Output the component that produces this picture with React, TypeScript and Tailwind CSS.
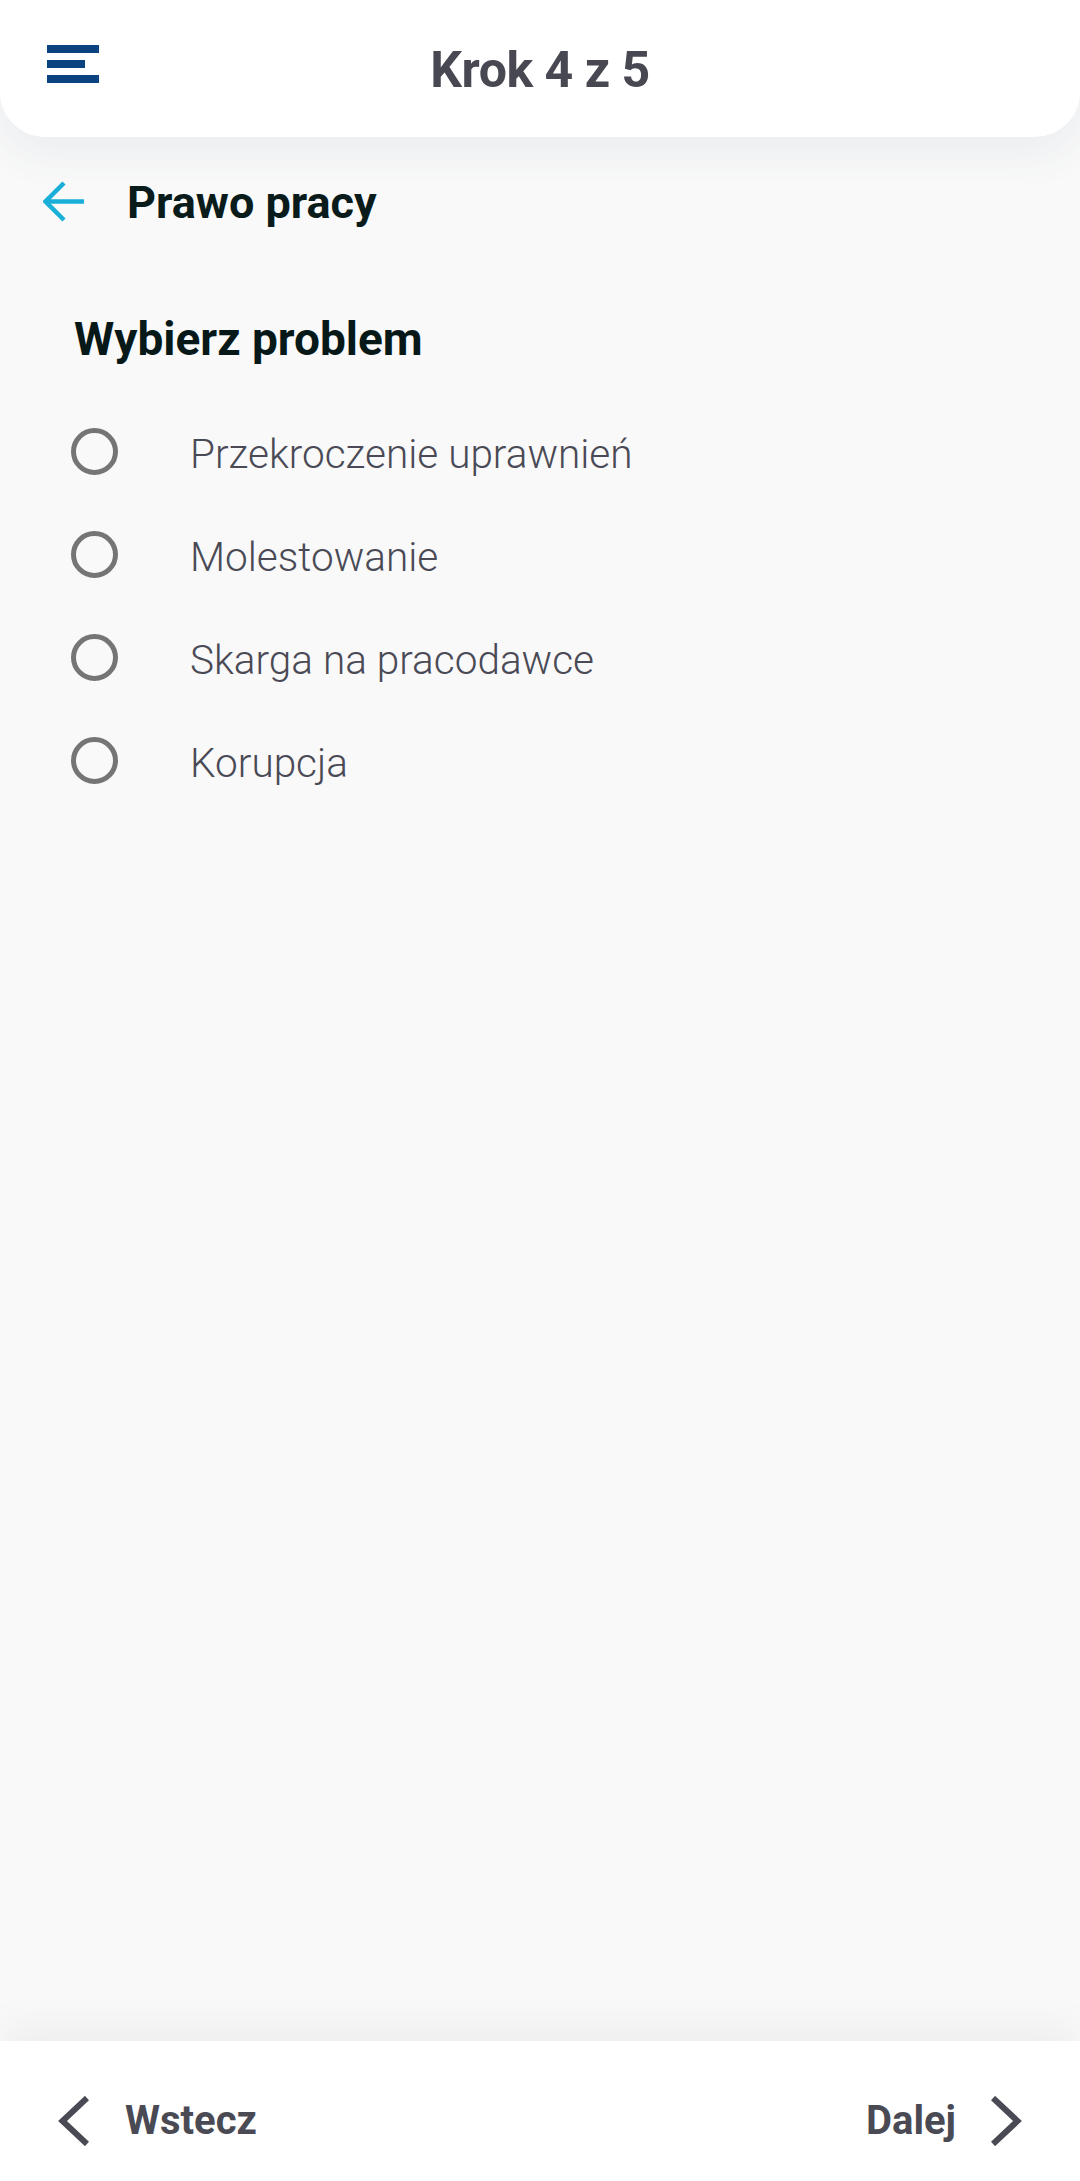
import React from "react";

const options = [
  "Przekroczenie uprawnień",
  "Molestowanie",
  "Skarga na pracodawce",
  "Korupcja",
];

export default function App() {
  return (
    <div
      className="w-[1080px] h-[2181px] bg-[#f9f9f9] flex flex-col overflow-hidden"
      style={{ fontFamily: "Roboto, 'Open Sans', sans-serif" }}
    >
      {/* Header */}
      <header className="h-[137px] shrink-0 bg-white rounded-b-[45px] shadow-[0_18px_40px_rgba(60,80,110,0.07)] grid grid-cols-[1fr_auto_1fr] items-start px-[47px] relative z-10">
        <button className="mt-[45px] flex flex-col gap-[7px] w-[52px]" aria-label="menu">
          <span className="block h-[8px] w-[52px] bg-[#0b4380]" />
          <span className="block h-[8px] w-[38px] bg-[#0b4380]" />
          <span className="block h-[8px] w-[52px] bg-[#0b4380]" />
        </button>
        <h1 className="mt-[45px] text-[50px] leading-[50px] font-bold text-[#484852] tracking-[-0.5px]">
          Krok 4 z 5
        </h1>
        <div />
      </header>

      {/* Content */}
      <main className="flex-1 flex flex-col">
        <div className="mt-[44px] flex items-start pl-[43px]">
          <svg width="41" height="41" viewBox="0 0 41 41" fill="none" className="shrink-0">
            <path d="M21 2 L2.5 20.5 L21 39" stroke="#1aafd9" strokeWidth="4.5" />
            <path d="M3 20.5 H41" stroke="#1aafd9" strokeWidth="4.5" />
          </svg>
          <h2 className="ml-[43px] text-[45px] leading-[44px] font-bold text-[#0a1b1b]">
            Prawo pracy
          </h2>
        </div>

        <h3 className="mt-[92px] ml-[74px] text-[46px] leading-[45px] font-bold text-[#071818]">
          Wybierz problem
        </h3>

        <div className="mt-[38px] flex flex-col">
          {options.map((o) => (
            <label key={o} className="h-[103px] flex items-center pl-[71px]">
              <span className="block w-[47px] h-[47px] rounded-full border-[5px] border-[#757575] shrink-0" />
              <span className="ml-[72px] mt-[4px] text-[40.5px] leading-[42px] font-light text-[#4a4a56]">
                {o}
              </span>
            </label>
          ))}
        </div>
      </main>

      {/* Bottom bar */}
      <footer className="h-[140px] shrink-0 bg-white shadow-[0_-18px_36px_rgba(0,0,0,0.045)] flex items-center justify-between px-[58px] pt-[20px] relative z-10">
        <button className="flex items-center">
          <svg width="31" height="50" viewBox="0 0 31 50" fill="none">
            <path d="M29 2 L4.5 25 L29 48" stroke="#4a4a55" strokeWidth="6" />
          </svg>
          <span className="ml-[36px] text-[40px] leading-[40px] font-bold text-[#4a4a55]">
            Wstecz
          </span>
        </button>
        <button className="flex items-center">
          <span className="mr-[35px] text-[40px] leading-[40px] font-bold text-[#4a4a55]">
            Dalej
          </span>
          <svg width="31" height="50" viewBox="0 0 31 50" fill="none">
            <path d="M2 2 L26.5 25 L2 48" stroke="#4a4a55" strokeWidth="6" />
          </svg>
        </button>
      </footer>
    </div>
  );
}
